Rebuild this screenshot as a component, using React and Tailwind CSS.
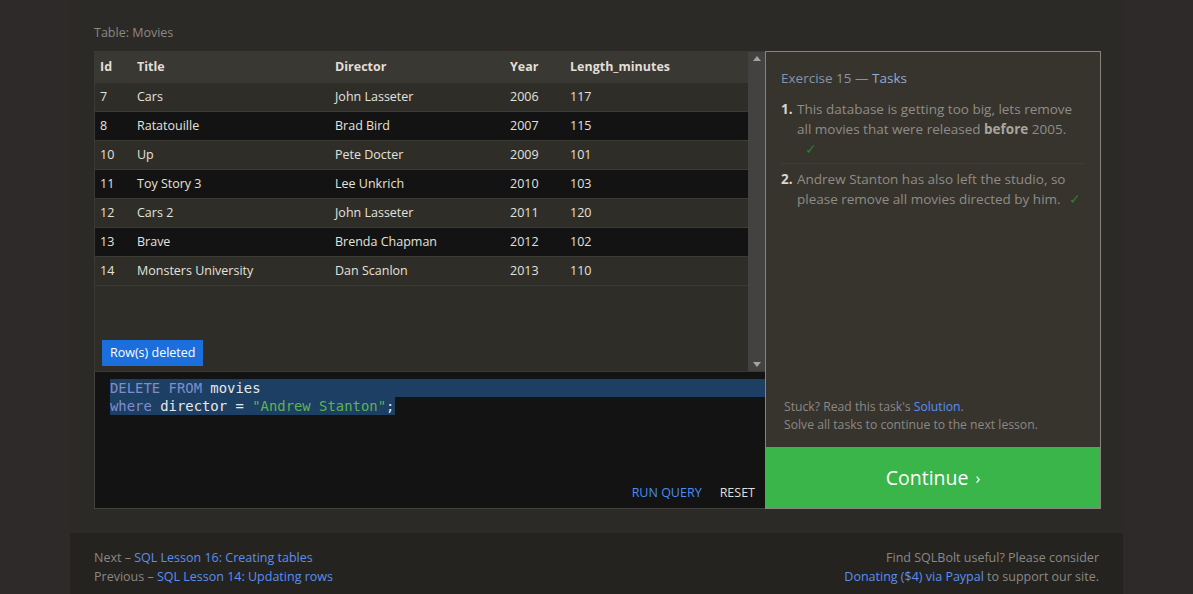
import React from 'react'

const movies = [
  { id: 7, title: 'Cars', director: 'John Lasseter', year: 2006, length: 117 },
  { id: 8, title: 'Ratatouille', director: 'Brad Bird', year: 2007, length: 115 },
  { id: 10, title: 'Up', director: 'Pete Docter', year: 2009, length: 101 },
  { id: 11, title: 'Toy Story 3', director: 'Lee Unkrich', year: 2010, length: 103 },
  { id: 12, title: 'Cars 2', director: 'John Lasseter', year: 2011, length: 120 },
  { id: 13, title: 'Brave', director: 'Brenda Chapman', year: 2012, length: 102 },
  { id: 14, title: 'Monsters University', director: 'Dan Scanlon', year: 2013, length: 110 },
]

const cols = 'grid grid-cols-[42px_198px_175px_60px_1fr]'

const Check = () => <span className="ml-2 text-[#2f7d33]">✓</span>

const App = () => {
  return (
    <div
      className="min-h-[594px] bg-[#2e2a29] text-[12.5px]"
      style={{ fontFamily: '"Open Sans", "Noto Sans", sans-serif' }}
    >
      <div className="mx-auto w-[1053px]">
        <div className="bg-[#2c2a26] pt-[24px] pr-[22px] pb-[24px] pl-[24px]">
          <p className="mb-[9px] leading-[18px] text-[#8b8884]">Table: Movies</p>
          <div className="flex">
            <div className="w-[671px] shrink-0">
              <div className="flex h-[321px] border border-[#3b3934] border-r-0">
                <div className="flex flex-1 flex-col bg-[#2f2d28]">
                  <div className={`${cols} h-[31px] items-center bg-[#3a3832] font-bold text-[#e0ded8]`}>
                    <span className="pl-[5px]">Id</span>
                    <span>Title</span>
                    <span>Director</span>
                    <span>Year</span>
                    <span>Length_minutes</span>
                  </div>
                  {movies.map((m, i) => (
                    <div
                      key={m.id}
                      className={`${cols} h-[29px] items-center border-b border-[#3c3a35] text-[#e4e2dd] ${
                        i % 2 === 1 ? 'bg-[#131313]' : 'bg-[#2f2d28]'
                      }`}
                    >
                      <span className="pl-[5px]">{m.id}</span>
                      <span>{m.title}</span>
                      <span>{m.director}</span>
                      <span>{m.year}</span>
                      <span>{m.length}</span>
                    </div>
                  ))}
                  <div className="flex flex-1 items-end px-[7px] pb-[5px]">
                    <span className="bg-[#1b6fdd] px-[8px] py-[4px] leading-[18px] text-white">Row(s) deleted</span>
                  </div>
                </div>
                <div className="flex w-[17px] flex-col items-center justify-between bg-[#434241] py-[4px]">
                  <svg width="8" height="5" viewBox="0 0 8 5">
                    <path d="M0 5 L4 0 L8 5 Z" fill="#a3a3a3" />
                  </svg>
                  <svg width="8" height="5" viewBox="0 0 8 5">
                    <path d="M0 0 L4 5 L8 0 Z" fill="#a3a3a3" />
                  </svg>
                </div>
              </div>
              <div className="flex h-[137px] flex-col border border-t-0 border-r-0 border-[#45433e] bg-[#131313]">
                <div
                  className="pt-[7px] text-[13.9px] leading-[18px]"
                  style={{ fontFamily: '"DejaVu Sans Mono", "Liberation Mono", monospace' }}
                >
                  <div className="ml-[15px] bg-[#1d3f63] text-[#e8e8e8]">
                    <span className="text-[#7f8ecb]">DELETE FROM</span> movies
                  </div>
                  <div className="ml-[15px] inline-block bg-[#1d3f63] pr-[1px] text-[#e8e8e8]">
                    <span className="text-[#7f8ecb]">where</span> director = <span className="text-[#5cb452]">"Andrew Stanton"</span>;
                  </div>
                </div>
                <div className="mt-auto flex justify-end gap-[18px] pr-[10px] pb-[6px] leading-[18px]">
                  <span className="text-[#4d8df5]">RUN QUERY</span>
                  <span className="text-[#e0ddd8]">RESET</span>
                </div>
              </div>
            </div>
            <div className="flex w-[336px] shrink-0 flex-col border border-[#87847e] bg-[#37342e]">
              <div className="px-[15px] pt-[16px]">
                <h3 className="text-[13.5px] leading-[20px] text-[#8494ab]">
                  Exercise 15 — <span className="text-[#93abd0]">Tasks</span>
                </h3>
                <ol className="mt-[11px] text-[13.5px] leading-[20px] text-[#8f8c86]">
                  <li className="flex border-b border-[#3e3b35] pb-[4px]">
                    <span className="w-[16px] shrink-0 font-bold text-[#d8d6d0]">1.</span>
                    <span>
                      This database is getting too big, lets remove all movies that were released{' '}
                      <b className="text-[#a9a6a0]">before</b> 2005.
                      <br />
                      <Check />
                    </span>
                  </li>
                  <li className="mt-[5px] flex">
                    <span className="w-[16px] shrink-0 font-bold text-[#d8d6d0]">2.</span>
                    <span>
                      Andrew Stanton has also left the studio, so please remove all movies directed by him.
                      <Check />
                    </span>
                  </li>
                </ol>
              </div>
              <div className="mt-auto px-[18px] pb-[13px] text-[12.2px] leading-[18px] text-[#8b8884]">
                <p>
                  Stuck? Read this task's <span className="text-[#5b8ff0]">Solution</span>.
                </p>
                <p>Solve all tasks to continue to the next lesson.</p>
              </div>
              <div className="flex h-[61px] items-center justify-center bg-[#39b54a] text-[19.5px] text-white">
                Continue <span className="ml-[7px] text-[16px]">›</span>
              </div>
            </div>
          </div>
        </div>
        <div className="flex h-[62px] justify-between bg-[#242320] px-6 pt-[15px] leading-[19px] text-[#8b8884]">
          <div>
            <p>
              Next – <span className="text-[#5b8ff0]">SQL Lesson 16: Creating tables</span>
            </p>
            <p>
              Previous – <span className="text-[#5b8ff0]">SQL Lesson 14: Updating rows</span>
            </p>
          </div>
          <div className="text-right">
            <p>Find SQLBolt useful? Please consider</p>
            <p>
              <span className="text-[#5b8ff0]">Donating ($4) via Paypal</span> to support our site.
            </p>
          </div>
        </div>
      </div>
    </div>
  )
}

export default App
